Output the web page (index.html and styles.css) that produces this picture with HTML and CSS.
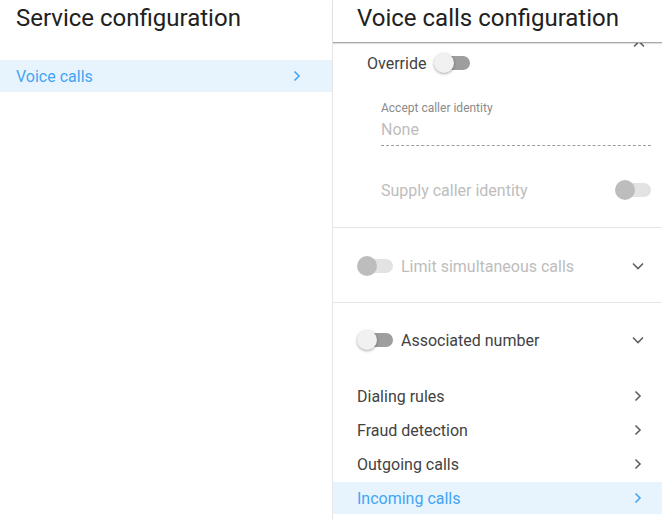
FILE: index.html
```html
<!DOCTYPE html>
<html>
<head>
<meta charset="utf-8">
<link rel="stylesheet" href="styles.css">
</head>
<body>
<div class="app">
  <aside class="left">
    <h1 class="title">Service configuration</h1>
    <div class="nav-item active">
      <span>Voice calls</span>
      <svg class="chev-r" width="8" height="12" viewBox="0 0 8 12"><path d="M1.5 1.5 L6 6 L1.5 10.5" fill="none" stroke="currentColor" stroke-width="1.6"/></svg>
    </div>
  </aside>
  <main class="right">
    <header class="rhead"><h1 class="title">Voice calls configuration</h1></header>
    <div class="content">
      <section class="sec sec-open">
        <div class="sec-top">
          <svg class="chev-up" width="12" height="8" viewBox="0 0 12 8"><path d="M1 6.5 L6 1.5 L11 6.5" fill="none" stroke="#616161" stroke-width="1.6"/></svg>
        </div>
        <div class="row override">
          <span class="lbl">Override</span>
          <span class="toggle on-dark"><span class="thumb"></span></span>
        </div>
        <div class="field">
          <div class="field-label">Accept caller identity</div>
          <div class="field-input">None</div>
        </div>
        <div class="row supply">
          <span class="lbl muted">Supply caller identity</span>
          <span class="toggle disabled"><span class="thumb"></span></span>
        </div>
      </section>
      <section class="sec sec-limit">
        <div class="row head-row">
          <span class="toggle disabled"><span class="thumb"></span></span>
          <span class="lbl muted grow">Limit simultaneous calls</span>
          <svg class="chev-d" width="12" height="8" viewBox="0 0 12 8"><path d="M1 1.5 L6 6.5 L11 1.5" fill="none" stroke="#616161" stroke-width="1.6"/></svg>
        </div>
      </section>
      <section class="sec sec-assoc">
        <div class="row head-row">
          <span class="toggle on-dark"><span class="thumb"></span></span>
          <span class="lbl grow">Associated number</span>
          <svg class="chev-d" width="12" height="8" viewBox="0 0 12 8"><path d="M1 1.5 L6 6.5 L11 1.5" fill="none" stroke="#616161" stroke-width="1.6"/></svg>
        </div>
      </section>
      <nav class="list">
        <div class="list-item"><span>Dialing rules</span><svg class="chev-r" width="8" height="12" viewBox="0 0 8 12"><path d="M1.5 1.5 L6 6 L1.5 10.5" fill="none" stroke="currentColor" stroke-width="1.6"/></svg></div>
        <div class="list-item"><span>Fraud detection</span><svg class="chev-r" width="8" height="12" viewBox="0 0 8 12"><path d="M1.5 1.5 L6 6 L1.5 10.5" fill="none" stroke="currentColor" stroke-width="1.6"/></svg></div>
        <div class="list-item"><span>Outgoing calls</span><svg class="chev-r" width="8" height="12" viewBox="0 0 8 12"><path d="M1.5 1.5 L6 6 L1.5 10.5" fill="none" stroke="currentColor" stroke-width="1.6"/></svg></div>
        <div class="list-item active"><span>Incoming calls</span><svg class="chev-r" width="8" height="12" viewBox="0 0 8 12"><path d="M1.5 1.5 L6 6 L1.5 10.5" fill="none" stroke="currentColor" stroke-width="1.6"/></svg></div>
      </nav>
    </div>
  </main>
</div>
</body>
</html>
```
FILE: styles.css
```css
* { box-sizing: border-box; }
html, body { margin: 0; padding: 0; background: #fff; }
body {
  font-family: Roboto, "Liberation Sans", sans-serif;
  color: #424242;
  width: 662px;
  height: 520px;
  overflow: hidden;
}
.app { display: flex; height: 520px; }

.title {
  margin: 0;
  font-size: 24px;
  font-weight: 400;
  line-height: 28px;
  color: #212121;
  padding-top: 4px;
}

.left {
  width: 333px;
  border-right: 1px solid #e6e6e6;
  flex: none;
}
.left .title { padding-left: 16px; height: 60px; }
.nav-item {
  height: 32px;
  display: flex;
  align-items: center;
  justify-content: space-between;
  padding: 0 31px 0 16px;
  font-size: 16px;
}
.active { background: #e8f4fd; color: #42a5f5; }

.right { flex: 1; display: flex; flex-direction: column; min-width: 0; }
.rhead {
  position: relative;
  z-index: 2;
  background: #fff;
  height: 43px;
  padding-left: 24px;
  border-bottom: 1px solid #a9a9a9;
  box-shadow: 0 1px 1px rgba(0,0,0,0.12);
}
.content { flex: 1; overflow: hidden; position: relative; z-index: 1; }

.sec { border-bottom: 1px solid #e6e6e6; }
.sec-top { height: 6px; display: flex; justify-content: flex-end; padding-right: 17px; }
.chev-up { margin-top: -3px; display: block; }

.row { display: flex; align-items: center; height: 28px; }
.lbl { font-size: 16px; }
.muted { color: #bdbdbd; }
.grow { flex: 1; }

.override { padding-left: 34px; gap: 8px; }

.field { margin: 24px 11px 0 48px; }
.field-label { font-size: 12px; line-height: 14px; color: #8a8a8a; }
.field-input {
  margin-top: 5px;
  font-size: 16px;
  line-height: 20px;
  height: 26px;
  padding-bottom: 5px;
  color: #bdbdbd;
  border-bottom: 1px dashed #9e9e9e;
}

.supply { margin-top: 30px; padding: 0 11px 0 48px; justify-content: space-between; }
.sec-open { padding-bottom: 23px; }

.sec-limit { padding: 24px 0 22px; }
.sec-assoc { padding: 23px 0 0; border-bottom: none; }
.head-row { padding: 0 18px 0 24px; gap: 8px; }
.chev-d { display: block; }

.toggle {
  position: relative;
  width: 36px;
  height: 20px;
  flex: none;
  display: inline-block;
}
.toggle::before {
  content: "";
  position: absolute;
  left: 2px; right: 0; top: 3px;
  height: 14px;
  border-radius: 7px;
  background: #9e9e9e;
}
.toggle .thumb {
  position: absolute;
  left: 0; top: 0;
  width: 20px; height: 20px;
  border-radius: 50%;
  background: #f1f1f1;
  box-shadow: 0 1px 3px rgba(0,0,0,0.35);
}
.toggle.disabled::before { background: #e3e3e3; }
.toggle.disabled .thumb { background: #bdbdbd; box-shadow: none; }

.list { padding-top: 24px; }
.list-item {
  height: 32px;
  margin-top: 2px;
  display: flex;
  align-items: center;
  justify-content: space-between;
  padding: 0 20px 0 24px;
  font-size: 16px;
  color: #424242;
}
.list-item .chev-r { color: #616161; }
.list-item.active { background: #e8f4fd; color: #42a5f5; }
.list-item.active .chev-r { color: #42a5f5; }
.nav-item .chev-r { color: #42a5f5; }
.chev-r { display: block; }
```
